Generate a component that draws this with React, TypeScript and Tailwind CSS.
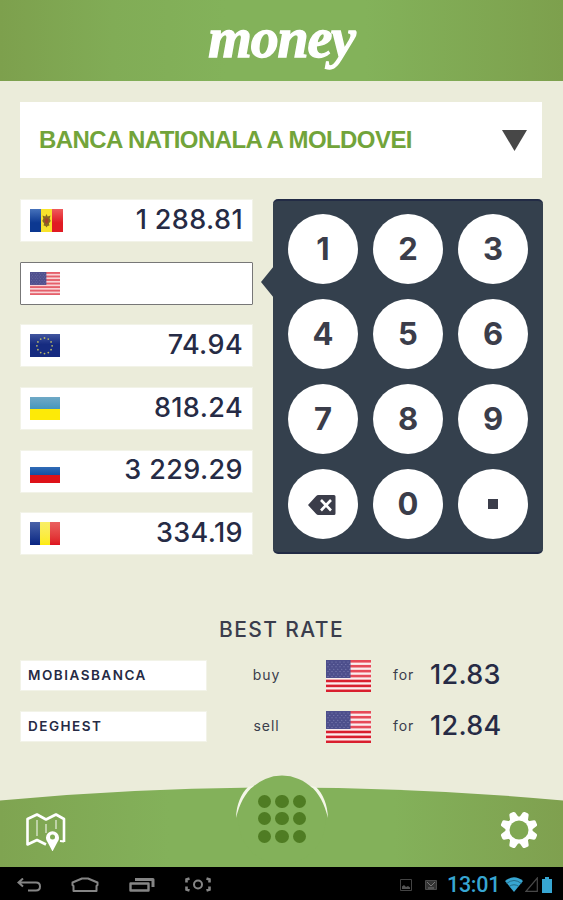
import React from 'react';

type FlagCode = 'md' | 'us' | 'eu' | 'ua' | 'ru' | 'ro';

interface RateRow {
  flag: FlagCode;
  value: string;
  active?: boolean;
}

const rows: RateRow[] = [
  { flag: 'md', value: '1 288.81' },
  { flag: 'us', value: '', active: true },
  { flag: 'eu', value: '74.94' },
  { flag: 'ua', value: '818.24' },
  { flag: 'ru', value: '3 229.29' },
  { flag: 'ro', value: '334.19' },
];

const keys = ['1', '2', '3', '4', '5', '6', '7', '8', '9', 'del', '0', '.'];

const bestRates = [
  { bank: 'MOBIASBANCA', action: 'buy', rate: '12.83' },
  { bank: 'DEGHEST', action: 'sell', rate: '12.84' },
];

const UsFlag: React.FC<{ className: string; soft?: boolean }> = ({ className, soft }) => (
  <svg viewBox="0 0 45 32" preserveAspectRatio="none" className={className}>
    <rect width="45" height="32" fill={soft ? '#f9d3d6' : '#fbeeee'} />
    {[0, 1, 2, 3, 4, 5, 6].map((i) => (
      <rect key={i} y={i * 4.92} width="45" height="2.6" fill={soft ? '#e5606b' : i < 4 ? '#e64a58' : '#d91f2e'} />
    ))}
    <rect width="24.5" height="18" fill={soft ? '#50508e' : '#4d4f8c'} />
    {[0, 1, 2, 3, 4, 5, 6].map((r) =>
      [0, 1, 2, 3, 4, 5].map((c) => (
        <circle key={`${r}-${c}`} cx={2 + c * 4 + (r % 2 ? 1.8 : 0)} cy={2 + r * 2.4} r="0.5" fill="#8f91c0" />
      ))
    )}
  </svg>
);

const Flag: React.FC<{ code: FlagCode }> = ({ code }) => {
  if (code === 'us') return <UsFlag className="w-[30px] h-[23px]" soft />;

  if (code === 'md') {
    return (
      <svg viewBox="0 0 33 23" className="w-[33px] h-[23px]">
        <defs>
          <linearGradient id="md-blue" x1="0" x2="0" y1="0" y2="1">
            <stop offset="0" stopColor="#4672bb" />
            <stop offset="0.6" stopColor="#0c3891" />
          </linearGradient>
          <linearGradient id="md-red" x1="0" x2="0" y1="0" y2="1">
            <stop offset="0" stopColor="#ef5a5c" />
            <stop offset="0.6" stopColor="#e01b23" />
          </linearGradient>
        </defs>
        <rect width="11" height="23" fill="url(#md-blue)" />
        <rect x="11" width="11" height="23" fill="#f8e32c" />
        <rect x="22" width="11" height="23" fill="url(#md-red)" />
        <path d="M16.5 5l1.2 2.6 2.8-1-.8 3 1 2.500-1.800 2.500.600 2-2 .400-1 1.500-1-1.500-2-.400.600-2-1.800-2.500 1-2.500-.8-3 2.800 1z" fill="#8a6a22" />
        <path d="M14.800 9.500h3.400v3.500l-1.700 2-1.700-2z" fill="#a4432b" />
      </svg>
    );
  }

  if (code === 'eu') {
    return (
      <svg viewBox="0 0 30 23" className="w-[30px] h-[23px]">
        <defs>
          <linearGradient id="eu-blue" x1="0" x2="0" y1="0" y2="1">
            <stop offset="0" stopColor="#42569f" />
            <stop offset="0.45" stopColor="#162b80" />
          </linearGradient>
        </defs>
        <rect width="30" height="23" fill="url(#eu-blue)" />
        {Array.from({ length: 12 }, (_, i) => (
          <circle
            key={i}
            cx={14.5 + 7.6 * Math.sin((i * Math.PI) / 6)}
            cy={11.8 - 7.8 * Math.cos((i * Math.PI) / 6)}
            r="0.9"
            fill="#b9b768"
          />
        ))}
      </svg>
    );
  }

  if (code === 'ua') {
    return (
      <div className="w-[30px] h-[23px] flex flex-col">
        <div className="flex-1 bg-gradient-to-b from-[#6fa9c6] to-[#4497bd]" />
        <div className="flex-1 bg-[#fdea07]" />
      </div>
    );
  }

  if (code === 'ru') {
    return (
      <div className="w-[30px] h-[23px] flex flex-col">
        <div className="flex-1 bg-white" />
        <div className="flex-1 bg-gradient-to-b from-[#2f6bb6] to-[#1450a2]" />
        <div className="flex-1 bg-[#de1218]" />
      </div>
    );
  }

  return (
    <div className="w-[30px] h-[23px] flex">
      <div className="flex-1 bg-gradient-to-b from-[#4a62a8] to-[#0a2482]" />
      <div className="flex-1 bg-gradient-to-b from-[#f9ee66] to-[#fdeb08]" />
      <div className="flex-1 bg-gradient-to-b from-[#ea6060] to-[#de1220]" />
    </div>
  );
};

const Keypad = () => (
  <div className="relative w-[270px] h-[355px] bg-[#34404d] border-y-2 border-[#222b45] rounded-[5px] pt-[12.500px] px-[15px]">
    {/* Pointer to the active row */}
    <svg viewBox="0 0 13 32" className="absolute -left-[12px] top-[65px] w-[13px] h-[32px]">
      <path d="M13 0L0 16l13 16z" fill="#34404d" />
    </svg>
    <div className="grid grid-cols-3 gap-[15px]">
      {keys.map((key) => (
        <button
          key={key}
          className="size-[70px] rounded-full bg-white flex items-center justify-center text-[31px] leading-none font-bold text-[#3b3d4a]"
        >
          {key === 'del' && (
            <svg viewBox="0 0 28 20" className="w-[28px] h-[20px] mt-[2px] -ml-[3px]">
              <path d="M0 10L8 1.2Q9 0 10.500 0H26q1.500 0 1.500 1.500v17q0 1.500-1.500 1.500H10.500Q9 20 8 18.800z" fill="#3b3d4a" />
              <path d="M13 5l10 10.500M23 5L13 15.500" stroke="#fff" strokeWidth="2.600" />
            </svg>
          )}
          {key === '.' && <span className="size-[10px] bg-[#3b3d4a]" />}
          {key !== 'del' && key !== '.' && key}
        </button>
      ))}
    </div>
  </div>
);

const Footer = () => (
  <footer className="relative h-[92px] shrink-0">
    <svg viewBox="0 0 563 92" className="absolute inset-0 w-full h-full">
      <defs>
        <linearGradient id="bar" x1="0" x2="563" y1="0" y2="0" gradientUnits="userSpaceOnUse">
          <stop offset="0" stopColor="#7fa451" />
          <stop offset="0.3" stopColor="#83b15a" />
          <stop offset="0.7" stopColor="#83b15a" />
          <stop offset="1" stopColor="#7fa04f" />
        </linearGradient>
      </defs>
      <path d="M0 25.500Q141 12.500 281.500 12.500T563 25.500V92H0z" fill="url(#bar)" />
      <ellipse cx="282" cy="45" rx="43.500" ry="44.500" fill="#83b15a" />
      <path d="M236 43C236.500 29 241 19 248 12L254 10.500C245 18 239.500 29 236 43z" fill="#f4f6e8" />
      <path d="M328 43C327.500 29 323 19 316 12L310 10.500C319 18 324.500 29 328 43z" fill="#f4f6e8" />
    </svg>
    <div className="relative flex justify-between items-start h-full">
      {/* Map with pin */}
      <svg viewBox="0 0 40 38" className="w-[40px] h-[38px] ml-[26px] mt-[38px]" fill="none" stroke="#fff">
        <path d="M20 31.500L11 27 1.500 31.500V6L11 1.500l9 5L30 1.500l8 4.500v23" strokeWidth="2.600" strokeLinejoin="round" />
        <path d="M38 28.500l-4-.5" strokeWidth="2" />
        <path d="M11 7v16M20 11v9M30 7v9" strokeWidth="1.300" opacity="0.75" />
        <path d="M26.500 38.500l-5-9.500a6.500 6.500 0 1 1 10 0z" fill="#fff" stroke="none" />
        <circle cx="26.500" cy="24" r="2.500" fill="#81ad57" stroke="none" />
      </svg>
      <div className="grid grid-cols-3 gap-[4.400px] mt-[19.500px] -ml-[2px]">
        {Array.from({ length: 9 }, (_, i) => (
          <span key={i} className="size-[13.300px] rounded-full bg-[#4f7c23]" />
        ))}
      </div>
      {/* Settings */}
      <svg viewBox="-19 -19 38 38" className="w-[38px] h-[38px] mr-[25px] mt-[36px]">
        {[22.5, 67.5, 112.5, 157.5].map((a) => (
          <path
            key={a}
            d="M-4.600 -12L-3.200 -17.500Q-2.800 -18.800 -1.500 -18.800H1.500Q2.800 -18.800 3.200 -17.500L4.600 -12V12L3.200 17.500Q2.800 18.800 1.500 18.800H-1.500Q-2.800 18.800 -3.200 17.500L-4.600 12z"
            fill="#fff"
            transform={`rotate(${a})`}
          />
        ))}
        <circle r="13.500" fill="#fff" />
        <circle r="9.500" fill="#80a853" />
      </svg>
    </div>
  </footer>
);

const NavBar = () => (
  <nav className="h-[33px] shrink-0 bg-black flex items-center pl-[17px] pr-[11px] pt-[2px]">
    <svg viewBox="0 0 24 14" className="w-[24px] h-[14px]" fill="none" stroke="#858585" strokeWidth="2">
      <path d="M6 .500L1.500 4.500 6 8.500M2 4.500h17q4 0 4 4t-4 4h-8" />
    </svg>
    <svg viewBox="0 0 28 15" className="w-[28px] h-[15px] ml-[30px]" fill="none" stroke="#858585" strokeWidth="2">
      <path d="M2.500 14V9L1.500 8V5.500L11 1.500h6l9.500 4V8l-1 1v5z" strokeLinejoin="round" />
    </svg>
    <svg viewBox="0 0 26 15" className="w-[26px] h-[15px] ml-[30px]" fill="none" stroke="#858585" strokeWidth="2">
      <path d="M1.500 6.500h18v7h-18z" strokeWidth="2.400" strokeLinejoin="round" />
      <path d="M6 2.500h18v7.500" strokeWidth="3" strokeLinejoin="round" />
    </svg>
    <svg viewBox="0 0 28 15" className="w-[28px] h-[15px] ml-[29px]" fill="none" stroke="#858585" strokeWidth="2.600">
      <path d="M5.500 1.500L2.500 2.500v3M5.500 13.500l-3-1v-3M22.500 1.500l3 1v3M22.500 13.500l3-1v-3" />
      <circle cx="14" cy="7.500" r="4" strokeWidth="2" />
    </svg>
    <div className="flex items-center ml-auto">
      <svg viewBox="0 0 12 12" className="w-[12px] h-[12px]">
        <path d="M.5.5h11v11H.5z" fill="none" stroke="#444" />
        <path d="M2 10V7.500l2-1.500 2 2 2-1 2 1.500V10z" fill="#555" />
      </svg>
      <svg viewBox="0 0 12 12" className="w-[12px] h-[12px] ml-[13px]">
        <path d="M.5 1.500h11v9H.5z" fill="#333" stroke="#4a4a4a" />
        <path d="M2 3l4 4 4-4M3 9h6" fill="none" stroke="#777" />
      </svg>
      <span className="ml-[10px] w-[51px] font-['Roboto',sans-serif] font-medium text-[21.500px] leading-none tracking-[-0.3px] text-[#37a6d2]">
        13:01
      </span>
      <svg viewBox="0 0 18 15" className="w-[18px] h-[15px] ml-[7px]">
        <path d="M0 4Q9-3.500 18 4L9 15z" fill="#37a6d2" />
        <path d="M1.500 6.500Q9 .5 16.500 6.500M4 9.500q5-3.500 10 0" fill="none" stroke="#1d5a74" strokeWidth="0.800" />
      </svg>
      <svg viewBox="0 0 13 15" className="w-[13px] h-[15px] ml-[2px]">
        <path d="M12.300 1v13.300H1z" fill="none" stroke="#484848" strokeWidth="1.200" />
      </svg>
      <svg viewBox="0 0 10 16" className="w-[10px] h-[16px] ml-[4px]">
        <path d="M0 2h3V0h4v2h3v14H0z" fill="#37a6d2" />
      </svg>
    </div>
  </nav>
);

export default function App() {
  return (
    <div className="w-[563px] h-[900px] flex flex-col overflow-hidden bg-[#ebecda] font-['Inter',sans-serif] text-[#262b45]">
      <header className="h-[81px] shrink-0 flex justify-center bg-[linear-gradient(90deg,#7da04d_0%,#81ac56_20%,#83b25a_40%,#83b25a_65%,#7da04d_100%)]">
        <h1 className="font-['Liberation_Serif',serif] italic font-bold text-[56px] leading-[77px] text-white tracking-[-1.200px] [-webkit-text-stroke:1.300px_white]">
          money
        </h1>
      </header>

      <main className="flex-1 px-[20px] pt-[21px]">
        <div className="h-[76px] w-[522px] bg-white flex items-center justify-between pl-[19px] pr-[15px]">
          <span className="font-['Liberation_Sans',sans-serif] font-bold text-[24px] tracking-[-0.580px] text-[#72a43a]">
            BANCA NATIONALA A MOLDOVEI
          </span>
          <svg viewBox="0 0 25 21" className="w-[25px] h-[21px]">
            <path d="M0 0h25L12.500 21z" fill="#474747" />
          </svg>
        </div>

        <div className="flex gap-[20px] mt-[21px]">
          <div className="w-[233px] flex flex-col gap-[19.700px]">
            {rows.map((row) => (
              <div
                key={row.flag}
                className={
                  row.active
                    ? 'h-[43px] bg-white border border-[#777] rounded-[1px] flex items-center justify-between pl-[9px] pr-[10px]'
                    : 'h-[43px] bg-white border border-[#f2f3e8] flex items-center justify-between pl-[9px] pr-[9px]'
                }
              >
                <Flag code={row.flag} />
                <span className="text-[27px] leading-none font-medium tracking-[0.400px] pb-[3px]">{row.value}</span>
              </div>
            ))}
          </div>
          <Keypad />
        </div>

        <h2 className="mt-[62px] text-center text-[21px] leading-[26px] tracking-[1.400px] font-medium text-[#3a3d4c]">BEST RATE</h2>

        <div className="mt-[17px] flex flex-col gap-[20px]">
          {bestRates.map((item) => (
            <div key={item.bank} className="flex items-center h-[31px]">
              <div className="w-[187px] h-[31px] bg-white border border-[#f2f3e8] flex items-center pl-[7px] pb-[1px] text-[13.500px] font-semibold tracking-[1.500px]">
                {item.bank}
              </div>
              <span className="w-[119px] text-center pb-[2px] text-[14px] tracking-[0.900px] text-[#3a3d4c]">{item.action}</span>
              <UsFlag className="w-[45px] h-[32px]" />
              <span className="ml-[22px] w-[37px] pb-[2px] text-[14px] tracking-[0.900px] text-[#3a3d4c]">for</span>
              <span className="text-[27px] leading-none font-medium tracking-[0.300px] pb-[2px]">{item.rate}</span>
            </div>
          ))}
        </div>
      </main>

      <Footer />
      <NavBar />
    </div>
  );
}
